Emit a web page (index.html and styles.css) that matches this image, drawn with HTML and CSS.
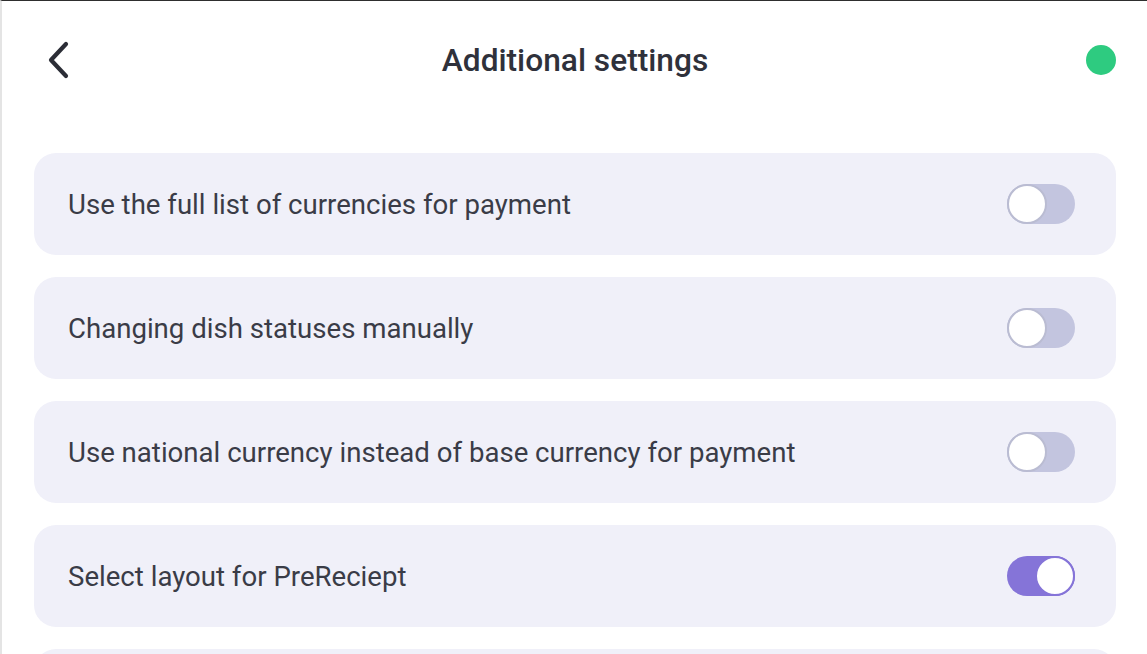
FILE: index.html
```html
<!doctype html>
<html lang=en>
<head>
	<meta charset=utf-8>
	<title>Additional settings</title>
	<link rel="stylesheet" href="styles.css">
</head>
<body>
	<div class="screen">
		<header class="topbar">
			<a class="back" href="#">
				<svg width="26" height="40" viewBox="0 0 26 40"><path d="M21 4 L6 20 L21 36" fill="none" stroke="#2b2d36" stroke-width="4.2" stroke-linecap="round" stroke-linejoin="round"/></svg>
			</a>
			<h1 class="title">Additional settings</h1>
			<span class="status"></span>
		</header>

		<div class="settings">
			<label class="row">
				<span>Use the full list of currencies for payment</span>
				<span class="toggle"></span>
			</label>
			<label class="row">
				<span>Changing dish statuses manually</span>
				<span class="toggle"></span>
			</label>
			<label class="row">
				<span>Use national currency instead of base currency for payment</span>
				<span class="toggle"></span>
			</label>
			<label class="row">
				<span>Select layout for PreReciept</span>
				<span class="toggle on"></span>
			</label>
			<label class="row">
				<span></span>
				<span class="toggle"></span>
			</label>
		</div>
	</div>
</body>
</html>
```

FILE: styles.css
```css
html, body { margin: 0; height: 100%; overflow: hidden; }
body { background: #fff; font-family: Roboto, "Noto Sans", sans-serif; color: #3a3c47; }

.screen { height: 100%; box-sizing: border-box;
	border-top: 1px solid #2e2e2e; border-left: 2px solid #e4e4e4; }

.topbar { height: 118px; display: grid; grid-template-columns: 1fr auto 1fr; align-items: center;
	padding: 0 31px 0 32px; }
.back { display: flex; width: 30px; margin-left: 11px; }
.title { margin: 0; font-size: 31.7px; font-weight: 500; color: #2f313b; }
.status { justify-self: end; width: 30px; height: 30px; border-radius: 50%; background: #2ecb80; }

.settings { display: flex; flex-direction: column; gap: 22px; padding: 34px 31px 0 32px; }
.row { height: 102px; flex: none; box-sizing: border-box; display: flex; align-items: center; justify-content: space-between;
	padding: 0 41px 0 34px; background: #f0f0f9; border-radius: 22px;
	font-size: 27.6px; }

.toggle { position: relative; width: 68px; height: 40px; border-radius: 20px; background: #c3c5df; flex: none; }
.toggle:after { content: ""; position: absolute; left: 0; top: 0; width: 40px; height: 40px;
	box-sizing: border-box; border-radius: 50%; background: #fff; border: 2px solid #babcd2; }
.toggle.on { background: #8574d8; }
.toggle.on:after { left: 28px; border-color: #8574d8; }
```
